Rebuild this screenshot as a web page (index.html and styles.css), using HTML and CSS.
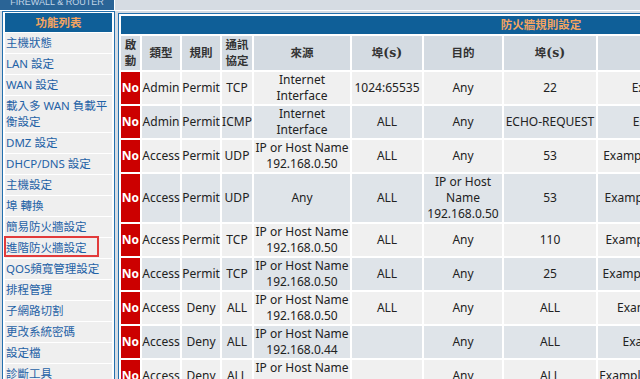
FILE: index.html
```html
<!DOCTYPE html>
<html lang="zh-Hant">
<head>
  <meta charset="UTF-8" />
  <title>進階防火牆設定</title>
  <link rel="stylesheet" href="styles.css">
</head>
<body>

  <div class="topbar">
    <div class="brand"><span>FIREWALL &amp; ROUTER</span></div>
  </div>

  <div class="layout">
    <div class="sidebar">
      <div class="menu-title">功能列表</div>
      <a class="menu-item" href="#">主機狀態</a>
      <a class="menu-item" href="#">LAN 設定</a>
      <a class="menu-item" href="#">WAN 設定</a>
      <a class="menu-item" href="#">載入多 WAN 負載平衡設定</a>
      <a class="menu-item" href="#">DMZ 設定</a>
      <a class="menu-item" href="#">DHCP/DNS 設定</a>
      <a class="menu-item" href="#">主機設定</a>
      <a class="menu-item" href="#">埠 轉換</a>
      <a class="menu-item" href="#">簡易防火牆設定</a>
      <a class="menu-item current" href="#">進階防火牆設定</a>
      <a class="menu-item" href="#">QOS頻寬管理設定</a>
      <a class="menu-item" href="#">排程管理</a>
      <a class="menu-item" href="#">子網路切割</a>
      <a class="menu-item" href="#">更改系統密碼</a>
      <a class="menu-item" href="#">設定檔</a>
      <a class="menu-item" href="#">診斷工具</a>
    </div>

    <div class="main">
      <table class="rules">
        <colgroup>
          <col style="width:19px"><col style="width:38px"><col style="width:38px"><col style="width:30px">
          <col style="width:96px"><col style="width:70px"><col style="width:78px"><col style="width:92px">
          <col style="width:180px"><col style="width:181px">
        </colgroup>
        <thead>
          <tr><th class="title" colspan="10">防火牆規則設定</th></tr>
          <tr class="head">
            <th>啟動</th>
            <th>類型</th>
            <th>規則</th>
            <th>通訊協定</th>
            <th>來源</th>
            <th>埠<span class="s">(s)</span></th>
            <th>目的</th>
            <th>埠<span class="s">(s)</span></th>
            <th>備註</th>
            <th>排程</th>
          </tr>
        </thead>
        <tbody id="rules"></tbody>
      </table>
    </div>
  </div>

  <script>
    const rules = [
      ["Admin", "Permit", "TCP", "Internet<br>Interface", "1024:65535", "Any", "22", "Example SSH Server"],
      ["Admin", "Permit", "ICMP", "Internet<br>Interface", "ALL", "Any", "ECHO-REQUEST", "Example Ping Reply"],
      ["Access", "Permit", "UDP", "IP or Host Name<br>192.168.0.50", "ALL", "Any", "53", "Example DNS Server (Primary)"],
      ["Access", "Permit", "UDP", "Any", "ALL", "IP or Host Name<br>192.168.0.50", "53", "Example DNS Server (Backup)"],
      ["Access", "Permit", "TCP", "IP or Host Name<br>192.168.0.50", "ALL", "Any", "110", "Example POP3 Mail Server 01"],
      ["Access", "Permit", "TCP", "IP or Host Name<br>192.168.0.50", "ALL", "Any", "25", "Example SMTP Outbound Mail"],
      ["Access", "Deny", "ALL", "IP or Host Name<br>192.168.0.50", "ALL", "Any", "ALL", "Example Blocked Host 01"],
      ["Access", "Deny", "ALL", "IP or Host Name<br>192.168.0.44", "", "Any", "ALL", "Example Blocked Hosts"],
      ["Access", "Deny", "ALL", "IP or Host Name<br>192.168.0.48/28", "", "Any", "ALL", "Example Blocked Subnet Range"]
    ];

    const body = document.getElementById("rules");

    rules.forEach(r => {
      const tr = document.createElement("tr");
      tr.innerHTML = `
        <td class="off">No</td>
        <td>${r[0]}</td>
        <td>${r[1]}</td>
        <td>${r[2]}</td>
        <td>${r[3]}</td>
        <td>${r[4]}</td>
        <td>${r[5]}</td>
        <td>${r[6]}</td>
        <td class="note">${r[7]}</td>
        <td>Always</td>
      `;
      body.appendChild(tr);
    });
  </script>
</body>
</html>
```

FILE: styles.css
```css
body {
  margin: 0;
  background: #d6dce3;
  font-family: "Noto Sans", "Noto Sans CJK TC", sans-serif;
  font-size: 12px;
  line-height: 16px;
  color: #222;
  overflow: hidden;
}

.topbar {
  display: flex;
  height: 10px;
  border-bottom: 1px solid #fff;
}

.brand {
  width: 114px;
  background: #2a6496;
  border-right: 1px solid #fff;
  overflow: hidden;
  color: #c3d6e8;
  font: 9px/12px "Liberation Sans", sans-serif;
  text-align: center;
  white-space: nowrap;
}

.brand span {
  display: block;
  margin-top: -4px;
}

.layout {
  display: flex;
  align-items: flex-start;
}

.sidebar {
  flex: none;
  width: 107px;
  margin-left: 2px;
  padding: 1px 2px 2px;
  border: 1px solid #2470ad;
  background: #fff;
  display: flex;
  flex-direction: column;
  gap: 1px;
  font-size: 11.5px;
}

.menu-title {
  height: 19px;
  line-height: 19px;
  background: #0f5f98;
  color: #f4a460;
  font-weight: bold;
  text-align: center;
}

.menu-item {
  position: relative;
  padding: 2px 0 2px 1px;
  background: #efefef;
  color: #1f62a6;
  text-decoration: none;
}

.menu-item.current::after {
  content: "";
  position: absolute;
  left: -1px;
  top: -2px;
  width: 95px;
  height: 21px;
  border: 2px solid #e23b3b;
  box-sizing: border-box;
}

.main {
  flex: none;
  margin: 2px 0 0 3px;
  border: 1px solid #2470ad;
  background: #fff;
}

.rules {
  table-layout: fixed;
  width: 844px;
  border-spacing: 2px;
}

.rules th,
.rules td {
  padding: 0;
  text-align: center;
  vertical-align: middle;
}

.rules .title {
  height: 18px;
  background: #0f5f98;
  color: #f4a460;
  font-size: 11.5px;
  font-weight: bold;
}

.head th {
  height: 34px;
  background: #d4dbe2;
  color: #333;
  font-size: 11.5px;
  font-weight: bold;
}

.head .s {
  font-family: "DejaVu Serif", serif;
  font-size: 12.5px;
}

.rules tbody tr:nth-child(odd) td {
  background: #f0f0f0;
}

.rules tbody tr:nth-child(even) td {
  background: #dfe4e9;
}

.rules tbody tr td.off {
  background: #cc0000;
  color: #fff;
  font-weight: bold;
}

.note {
  white-space: nowrap;
}
```
